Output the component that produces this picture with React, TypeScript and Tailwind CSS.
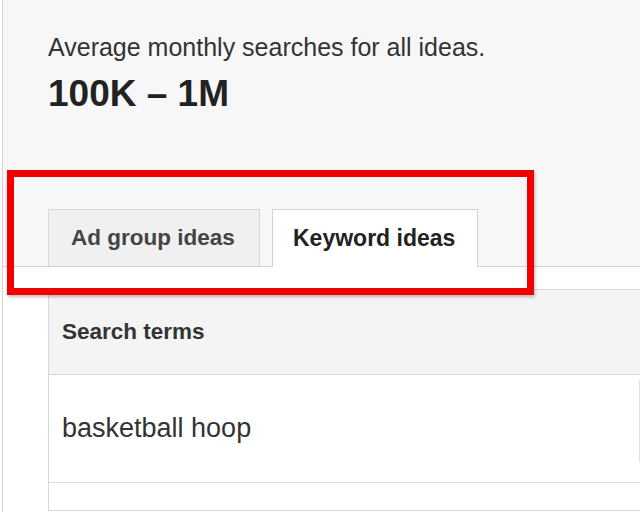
export default function App() {
  return (
    <div className="relative w-[640px] h-[512px] overflow-hidden bg-white font-['Liberation_Sans',Arial,sans-serif]">
      <div className="ml-[2px] h-full border-l border-[#d4d4d4]">
        {/* summary */}
        <div className="bg-[#f7f7f7] pl-[45px] pt-[33px]">
          <p className="text-[25px] leading-[28px] text-[#333]">
            Average monthly searches for all ideas.
          </p>
          <p className="mt-[13px] text-[37px] leading-[40px] font-bold text-[#222]">
            100K – 1M
          </p>

          {/* tabs */}
          <div className="mt-[95px] -ml-[45px] pl-[45px] flex items-end gap-[12px] border-b border-[#d2d2d2]">
            <div className="h-[57px] w-[212px] flex items-center pl-[22px] bg-[#f0f0f0] border-t border-l border-r border-[#d8d8d8] text-[22.5px] font-bold text-[#444]">
              Ad group ideas
            </div>
            <div className="h-[58px] -mb-px w-[206px] flex items-center pl-[20px] bg-white border-t border-l border-r border-[#d2d2d2] text-[23px] font-bold text-[#222]">
              Keyword ideas
            </div>
          </div>
        </div>

        {/* results table */}
        <div className="pt-[22px] pl-[45px]">
          <div className="border-t border-l border-[#d8d8d8]">
            <div className="h-[85px] flex items-center pl-[13px] bg-[#f4f4f4] border-b border-[#d8d8d8] text-[22.5px] font-bold text-[#333]">
              Search terms
            </div>
            <div className="h-[108px] flex border-b border-[#dcdcdc]">
              <div className="w-[590px] flex items-center pl-[13px] text-[27px] text-[#333]">
                basketball hoop
              </div>
              <div className="flex-1 my-[5px] mb-[20px] border-l border-[#e2e2e2]" />
            </div>
            <div className="h-[28px] border-b border-[#d8d8d8]" />
          </div>
        </div>
      </div>

      {/* highlight annotation */}
      <div className="absolute left-[7px] top-[170px] w-[527px] h-[125px] border-[7px] border-[#f20000] shadow-[1px_2px_3px_rgba(0,0,0,0.25)]" />
    </div>
  );
}
